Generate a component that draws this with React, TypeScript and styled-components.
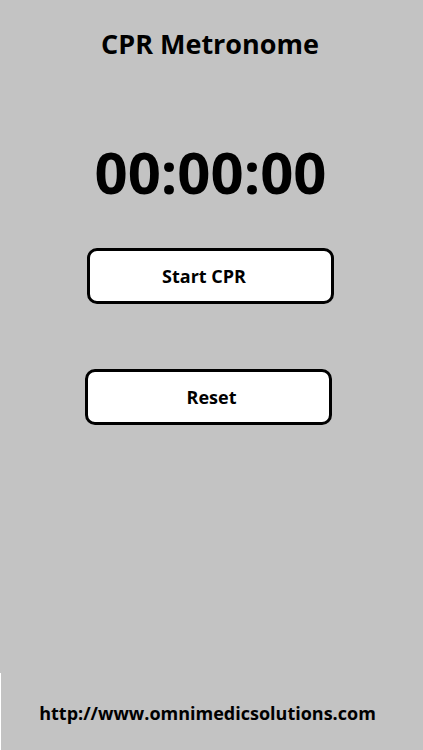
import React from "react";
import styled, { createGlobalStyle } from "styled-components";

const Global = createGlobalStyle`
  html, body { margin: 0; padding: 0; background: #c3c3c3; }
  body { font-family: "Open Sans", "Lato", sans-serif; }
`;

const Page = styled.div`
  width: 423px;
  height: 750px;
  background: #c3c3c3;
  display: flex;
  flex-direction: column;
  align-items: center;
  color: #000;
  font-weight: 700;
  box-sizing: border-box;
`;

const Title = styled.h1`
  margin: 28px 0 0;
  font-size: 27px;
  line-height: 32px;
  font-weight: 700;
  padding-right: 3px;
`;

const Timer = styled.div`
  margin-top: 77px;
  font-size: 58px;
  line-height: 70px;
  font-weight: 700;
  padding-right: 2px;
`;

const Button = styled.button<{ $shift: number; $textShift: number }>`
  width: 247px;
  height: 56px;
  margin-left: ${(p) => p.$shift}px;
  background: #fff;
  border: 3px solid #000;
  border-radius: 10px;
  font-family: "Open Sans", "Lato", sans-serif;
  font-size: 18px;
  font-weight: 700;
  color: #000;
  display: flex;
  align-items: center;
  justify-content: center;
  padding: 0 ${(p) => (p.$textShift < 0 ? -2 * p.$textShift : 0)}px 0
    ${(p) => (p.$textShift > 0 ? 2 * p.$textShift : 0)}px;
`;

const ButtonStack = styled.div`
  margin-top: 41px;
  display: flex;
  flex-direction: column;
  align-items: center;
  gap: 65px;
`;

const Footer = styled.footer`
  margin-top: auto;
  align-self: stretch;
  height: 77px;
  border-left: 1px solid #fff;
  display: flex;
  justify-content: center;
  padding: 29px 9px 0 0;
  box-sizing: border-box;
  font-size: 18px;
  line-height: 22px;
`;

export default function App() {
  return (
    <>
      <Global />
      <Page>
        <Title>CPR Metronome</Title>
        <Timer>00:00:00</Timer>
        <ButtonStack>
          <Button $shift={-3} $textShift={-6}>Start CPR</Button>
          <Button $shift={-6} $textShift={3}>Reset</Button>
        </ButtonStack>
        <Footer>http://www.omnimedicsolutions.com</Footer>
      </Page>
    </>
  );
}
